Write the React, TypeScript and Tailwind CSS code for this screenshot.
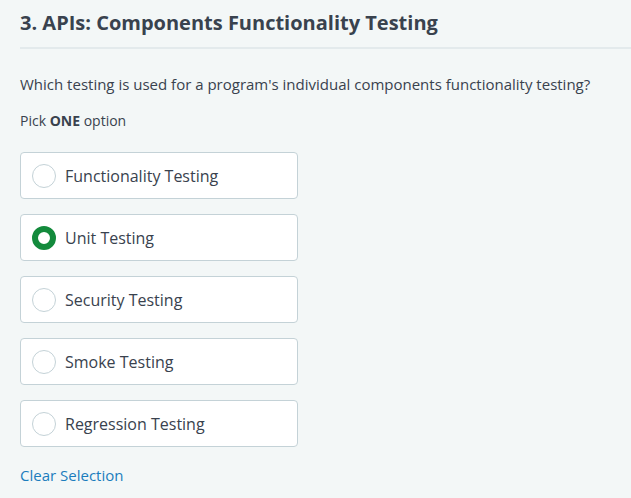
import React from "react";

const options = [
  "Functionality Testing",
  "Unit Testing",
  "Security Testing",
  "Smoke Testing",
  "Regression Testing",
];

export default function App() {
  return (
    <div
      className="w-[631px] h-[498px] bg-[#f3f7f7] text-[#39424e] overflow-hidden"
      style={{ fontFamily: '"Open Sans", sans-serif' }}
    >
      <div className="pl-[20px] pt-[9px]">
        <h1 className="text-[20px] leading-[28px] font-bold text-[#39424e]">
          3. APIs: Components Functionality Testing
        </h1>
        <div className="mt-[10px] h-[2px] bg-[#e3eaec]" />
        <p className="mt-[24px] text-[15px] leading-[22px]">
          Which testing is used for a program's individual components functionality testing?
        </p>
        <p className="mt-[16px] text-[14px] leading-[20px]">
          Pick <span className="font-bold">ONE</span> option
        </p>
        <div className="mt-[21px] flex flex-col gap-[15px]">
          {options.map((o, i) => (
            <div
              key={o}
              className="w-[278px] h-[47px] bg-white border border-[#c4d2d7] rounded-[4px] flex items-center pl-[11px]"
            >
              {i === 1 ? (
                <div className="w-[24px] h-[24px] rounded-full border-[6px] border-[#138a3c] bg-white" />
              ) : (
                <div className="w-[24px] h-[24px] rounded-full border border-[#c4d2d7] bg-white" />
              )}
              <span className="ml-[9px] text-[16px] leading-[22px] text-[#39424e]">{o}</span>
            </div>
          ))}
        </div>
        <div className="mt-[17px] text-[15px] leading-[22px] text-[#1b7dbd]">Clear Selection</div>
      </div>
    </div>
  );
}
